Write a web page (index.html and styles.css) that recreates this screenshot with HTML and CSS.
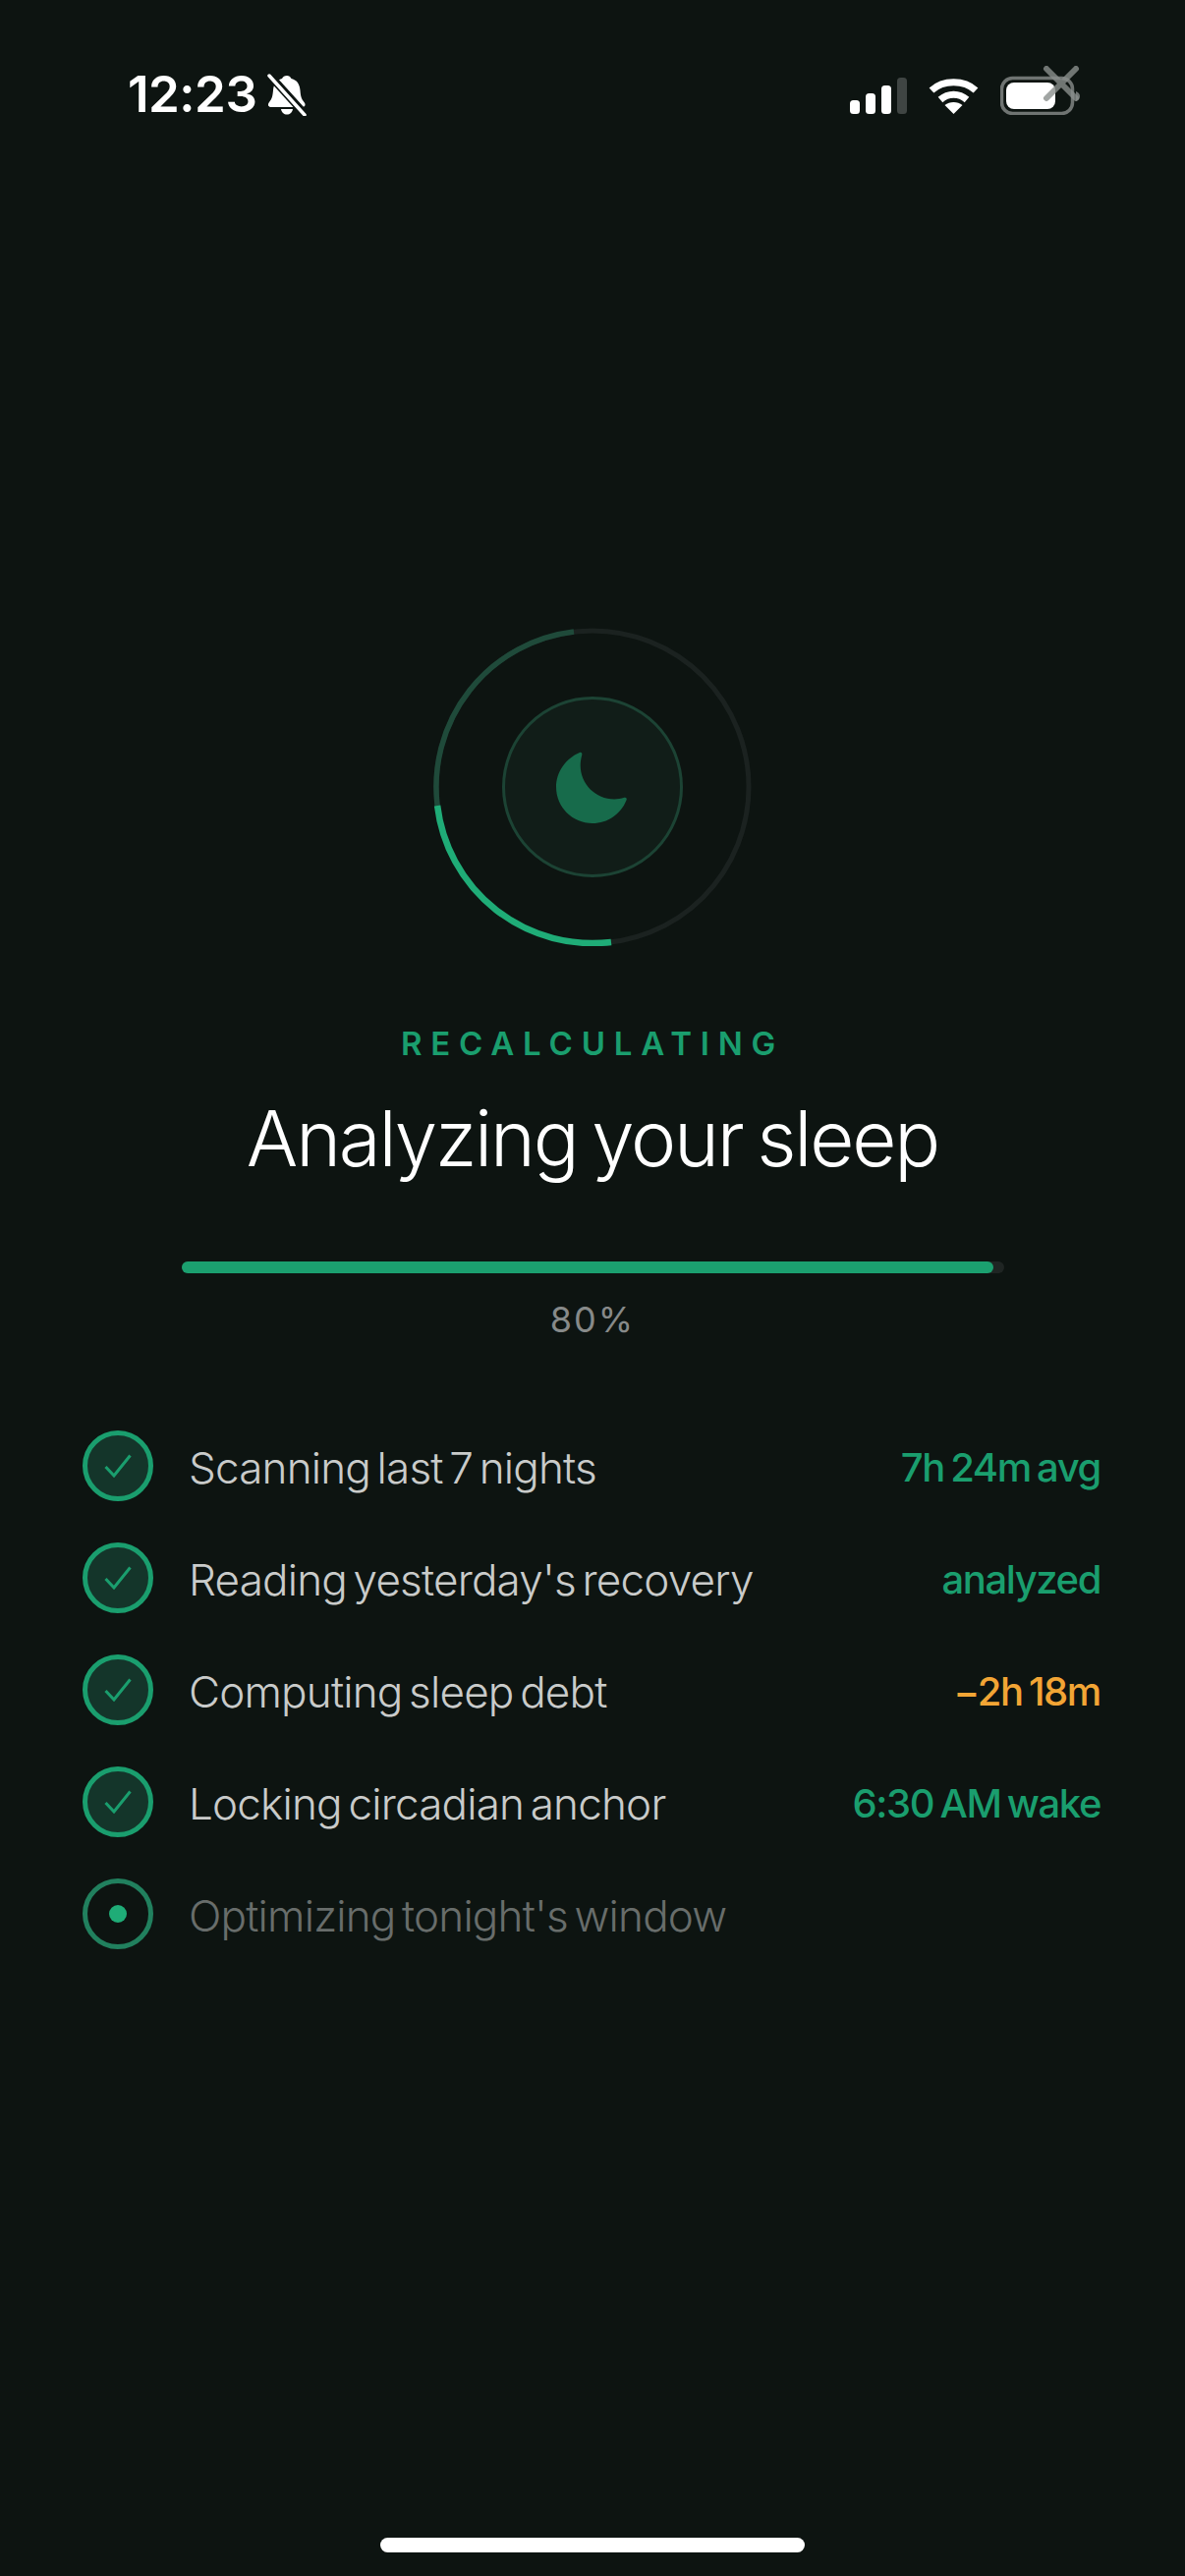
FILE: index.html
```html
<!DOCTYPE html>
<html lang="en">
<head>
    <meta charset="UTF-8">
    <meta name="viewport" content="width=device-width, initial-scale=1.0">
    <title>Analyzing your sleep</title>
    <link rel="stylesheet" href="styles.css">
</head>
<body>
    <div class="status-bar">
        <div class="status-left">
            <span class="clock">12:23</span>
            <svg class="bell" width="42" height="44" viewBox="0 0 42 44">
                <path fill="#fff" d="M21 3c2 0 3.500 1 4.500 3 6 1.500 8.500 6 9 12 .4 6 1.500 9 4 12 2 2.500 1 5-2 5H5c-3 0-4-2.500-2-5 2.500-3 3.500-6 4-12 .5-6 3-10.500 9-12 1-2 2.500-3 5-3z"/>
                <path fill="#fff" d="M15 37h12c-.5 3.500-3 5.500-6 5.500s-5.500-2-6-5.500z"/>
                <path stroke="#0d1411" stroke-width="8" d="M2 1l38 42"/>
                <path stroke="#fff" stroke-width="3.500" stroke-linecap="round" d="M3 3l36 40"/>
            </svg>
        </div>
        <div class="status-right">
            <svg width="58" height="37" viewBox="0 0 58 37">
                <rect x="0" y="23" width="10" height="14" rx="3.500" fill="#fff"/>
                <rect x="16" y="16" width="10" height="21" rx="3.500" fill="#fff"/>
                <rect x="32" y="8" width="10" height="29" rx="3.500" fill="#fff"/>
                <rect x="48" y="0" width="10" height="37" rx="3.500" fill="#3f4543"/>
            </svg>
            <svg width="51" height="37" viewBox="0 0 51 37">
                <path fill="none" stroke="#fff" stroke-width="7" d="M3 13C15 2 36 2 48 13"/>
                <path fill="none" stroke="#fff" stroke-width="7" d="M12 22.500c8-7 19-7 27 0"/>
                <path fill="#fff" d="M25.500 37l-9-9c5-4 13-4 18 0z"/>
            </svg>
            <svg class="battery" width="82" height="50" viewBox="0 0 82 50">
                <rect x="1.500" y="12.500" width="72" height="36" rx="11" fill="none" stroke="#6f7472" stroke-width="3.500"/>
                <rect x="6" y="17" width="50" height="27" rx="8" fill="#fff"/>
                <path d="M77 26c3 1 4 3 4 5s-1 4-4 5z" fill="#6f7472"/>
                <path d="M47 3l30 30M77 3L47 33" stroke="#8a8e8c" stroke-opacity=".8" stroke-width="6" stroke-linecap="round"/>
            </svg>
        </div>
    </div>

    <div class="main">
        <div class="ring">
            <svg width="324" height="324" viewBox="0 0 324 324">
                <circle cx="162" cy="162" r="159" fill="none" stroke="#1b2220" stroke-width="5"/>
                <!-- dim quarter arc, then the same arc turned back 90 degrees for the bright one -->
                <path d="M143 4.100A159 159 0 0 0 4.100 181" fill="none" stroke="#1f4a3a" stroke-width="5.500"/>
                <path d="M143 4.100A159 159 0 0 0 4.100 181" transform="rotate(-90 162 162)" fill="none" stroke="#1fac77" stroke-width="6.500"/>
            </svg>
            <div class="ring-core">
                <svg width="74" height="74" viewBox="0 0 74 74">
                    <path fill="#176b4b" d="M24 2c1.500-.6 2.700.6 2.300 2.200C25.300 8 24.700 11.500 24.700 15c0 19 15.500 34.500 34.500 34.500 3.200 0 7-.6 10.200-1.700 1.600-.5 3 .8 2.200 2.400C66 64.500 52.500 74 37 74 16.500 74 0 57.500 0 37 0 22 9.500 8 24 2z"/>
                </svg>
            </div>
        </div>

        <div class="eyebrow">RECALCULATING</div>
        <h1 class="title">Analyzing your sleep</h1>

        <div class="progress">
            <div class="progress-fill" style="width: 98.8%"></div>
        </div>
        <div class="percent">80%</div>

        <div class="steps">
            <div class="step">
                <span class="dot done"><svg width="28" height="24" viewBox="0 0 28 24"><path d="M1.500 13l8.500 9L26.500 1.500"/></svg></span>
                <span class="step-name">Scanning last 7 nights</span>
                <span class="step-value">7h 24m avg</span>
            </div>
            <div class="step">
                <span class="dot done"><svg width="28" height="24" viewBox="0 0 28 24"><path d="M1.500 13l8.500 9L26.500 1.500"/></svg></span>
                <span class="step-name">Reading yesterday's recovery</span>
                <span class="step-value">analyzed</span>
            </div>
            <div class="step">
                <span class="dot done"><svg width="28" height="24" viewBox="0 0 28 24"><path d="M1.500 13l8.500 9L26.500 1.500"/></svg></span>
                <span class="step-name">Computing sleep debt</span>
                <span class="step-value amber">−2h 18m</span>
            </div>
            <div class="step">
                <span class="dot done"><svg width="28" height="24" viewBox="0 0 28 24"><path d="M1.500 13l8.500 9L26.500 1.500"/></svg></span>
                <span class="step-name">Locking circadian anchor</span>
                <span class="step-value">6:30 AM wake</span>
            </div>
            <div class="step active">
                <span class="dot"><i class="pip"></i></span>
                <span class="step-name">Optimizing tonight's window</span>
            </div>
        </div>
    </div>

    <div class="home-bar"></div>
</body>
</html>
```
FILE: styles.css
```css
* {
    box-sizing: border-box;
}
html, body {
    margin: 0;
    height: 100%;
}
body {
    background-color: #0d1411;
    color: #fff;
    font-family: Inter, "Noto Sans", sans-serif;
    display: flex;
    flex-direction: column;
    height: 2622px;
    overflow: hidden;
}
.status-bar {
    display: flex;
    justify-content: space-between;
    align-items: flex-start;
    padding: 67px 114px 0 130px;
    height: 130px;
}
.status-left {
    display: flex;
    align-items: center;
    gap: 10px;
    padding-top: 7px;
}
.clock {
    font-size: 51px;
    font-weight: 600;
    line-height: 44px;
    letter-spacing: -0.5px;
}
.status-right {
    display: flex;
    align-items: flex-start;
    gap: 22px;
    padding-top: 12px;
}
.status-right .battery {
    margin-top: -12px;
    margin-right: -8px;
}
.main {
    display: flex;
    flex-direction: column;
    align-items: center;
    padding: 509px 84px 0;
}
.ring {
    width: 324px;
    height: 324px;
    position: relative;
    display: flex;
    align-items: center;
    justify-content: center;
}
.ring > svg {
    position: absolute;
    top: 0;
    left: 0;
}
.ring-core {
    width: 184px;
    height: 184px;
    border-radius: 50%;
    border: 3px solid #1c4334;
    background-color: #111d18;
    display: flex;
    align-items: center;
    justify-content: center;
    position: relative;
}
.eyebrow {
    margin-top: 79px;
    font-size: 33px;
    line-height: 40px;
    font-weight: 600;
    letter-spacing: 8.800px;
    color: #1a9e6e;
}
.title {
    margin: 27px 0 0;
    font-size: 78px;
    line-height: 100px;
    font-weight: 300;
    letter-spacing: -2.200px;
    word-spacing: -5px;
    color: #fff;
}
.progress {
    margin-top: 75px;
    width: 837px;
    height: 12px;
    border-radius: 6px;
    background-color: #1f2523;
}
.progress-fill {
    height: 100%;
    border-radius: 6px;
    background-color: #1ba06f;
}
.percent {
    margin-top: 25px;
    font-size: 36px;
    line-height: 44px;
    font-weight: 400;
    letter-spacing: 2px;
    color: #878a89;
}
.steps {
    margin-top: 91px;
    width: 100%;
    display: flex;
    flex-direction: column;
    gap: 42px;
}
.step {
    display: flex;
    align-items: center;
    gap: 36px;
    height: 72px;
}
.dot {
    width: 72px;
    height: 72px;
    border-radius: 50%;
    border: 5px solid #1a9e6e;
    flex-shrink: 0;
    display: flex;
    align-items: center;
    justify-content: center;
}
.dot.done {
    background-color: #14352a;
}
.dot svg path {
    fill: none;
    stroke: #1a9e6e;
    stroke-width: 3px;
}
.pip {
    width: 18px;
    height: 18px;
    border-radius: 50%;
    background-color: #1fac77;
}
.step-name {
    font-size: 44px;
    font-weight: 300;
    letter-spacing: -0.800px;
    word-spacing: -5px;
    color: #c9cbca;
    flex: 1;
    padding-top: 3px;
}
.step-value {
    font-size: 40px;
    font-weight: 500;
    letter-spacing: -1.400px;
    word-spacing: -3px;
    color: #1a9e6e;
    margin-right: 2px;
    padding-top: 3px;
}
.step-value.amber {
    color: #f2a535;
}
.active .dot {
    border-color: #21805e;
}
.active .step-name {
    color: #686d6b;
}
.home-bar {
    margin: auto auto 24px;
    width: 432px;
    height: 15px;
    border-radius: 8px;
    background-color: #fff;
}
```
